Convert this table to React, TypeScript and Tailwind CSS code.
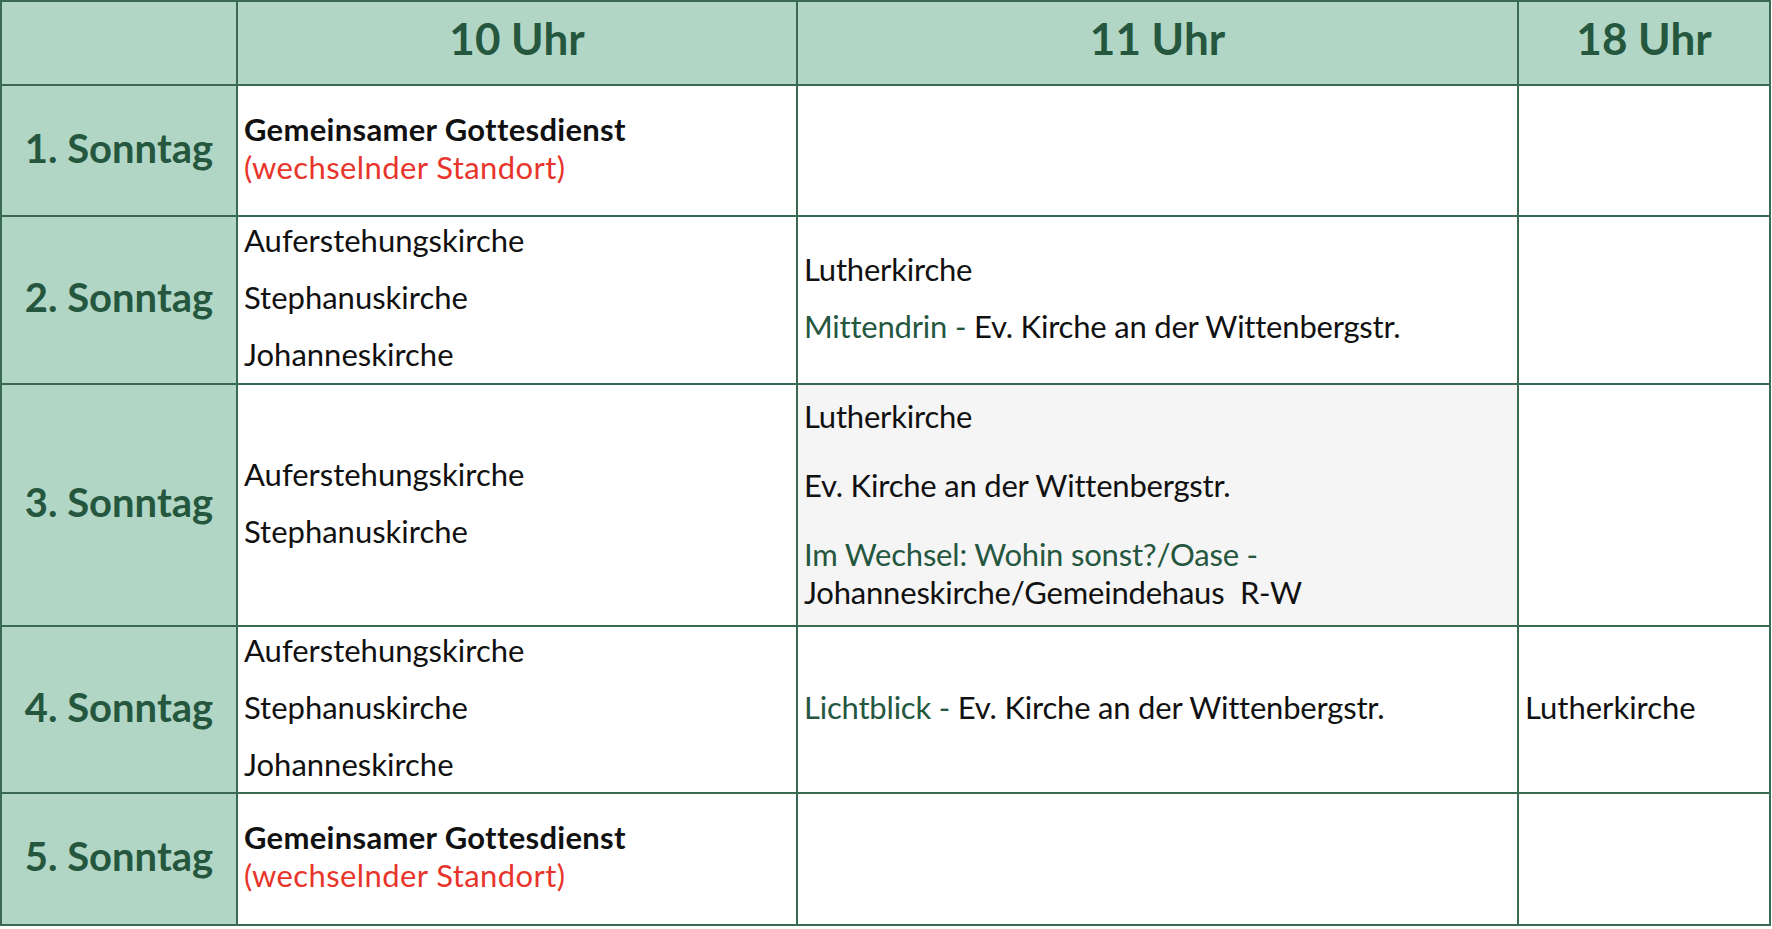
import React from 'react';

const FONT = { fontFamily: 'Lato, "Open Sans", sans-serif' };

const Green = ({ children }: { children: React.ReactNode }) => (
  <span className="text-[#25573f]">{children}</span>
);

const Joint = () => (
  <p className="leading-[38px]">
    <span className="font-bold tracking-[0.3px]">Gemeinsamer Gottesdienst</span>
    <br />
    <span className="text-[#e8352b] tracking-[0.4px]">(wechselnder Standort)</span>
  </p>
);

const App: React.FC = () => {
  const head = 'bg-[#b2d6c5] border-r-2 border-b-2 border-[#3b6a52] flex items-center justify-center pb-[10px] text-[44px] font-bold text-[#25573f]';
  const label = 'bg-[#b2d6c5] border-r-2 border-b-2 border-[#3b6a52] flex items-center justify-center pb-[6px] text-[40px] font-bold text-[#25573f]';
  const base = 'border-r-2 border-b-2 border-[#3b6a52] flex flex-col justify-center pl-[6px] text-[31px] leading-[38px] text-[#111]';
  const cell = `${base} bg-white gap-[19px] pb-[6px]`;
  const midCell = `${base} bg-white gap-[19px] pb-[6px] tracking-[-0.2px]`;
  const greyCell = `${base} bg-[#f5f5f5] gap-[31px] pb-[3px] tracking-[-0.2px]`;

  return (
    <div className="w-full h-[929px] bg-white" style={FONT}>
      <div className="grid grid-cols-[236px_560px_721px_252px] grid-rows-[84px_131px_168px_242px_167px_132px] w-fit border-t-2 border-l-2 border-[#3b6a52]">
        {/* header */}
        <div className={head}></div>
        <div className={head}>10 Uhr</div>
        <div className={head}>11 Uhr</div>
        <div className={head}>18 Uhr</div>

        {/* 1. Sonntag */}
        <div className={label}>1. Sonntag</div>
        <div className={cell}><Joint /></div>
        <div className={cell}></div>
        <div className={cell}></div>

        {/* 2. Sonntag */}
        <div className={label}>2. Sonntag</div>
        <div className={cell}>
          <p>Auferstehungskirche</p>
          <p>Stephanuskirche</p>
          <p>Johanneskirche</p>
        </div>
        <div className={midCell}>
          <p>Lutherkirche</p>
          <p><Green>Mittendrin -</Green> Ev. Kirche an der Wittenbergstr.</p>
        </div>
        <div className={cell}></div>

        {/* 3. Sonntag */}
        <div className={label}>3. Sonntag</div>
        <div className={cell}>
          <p>Auferstehungskirche</p>
          <p>Stephanuskirche</p>
        </div>
        <div className={greyCell}>
          <p>Lutherkirche</p>
          <p>Ev. Kirche an der Wittenbergstr.</p>
          <p>
            <Green>Im Wechsel: Wohin sonst?/Oase -</Green>
            <br />
            Johanneskirche/Gemeindehaus&nbsp; R-W
          </p>
        </div>
        <div className={cell}></div>

        {/* 4. Sonntag */}
        <div className={label}>4. Sonntag</div>
        <div className={cell}>
          <p>Auferstehungskirche</p>
          <p>Stephanuskirche</p>
          <p>Johanneskirche</p>
        </div>
        <div className={midCell}>
          <p><Green>Lichtblick -</Green> Ev. Kirche an der Wittenbergstr.</p>
        </div>
        <div className={cell}>
          <p>Lutherkirche</p>
        </div>

        {/* 5. Sonntag */}
        <div className={label}>5. Sonntag</div>
        <div className={cell}><Joint /></div>
        <div className={cell}></div>
        <div className={cell}></div>
      </div>
    </div>
  );
};

export default App;
